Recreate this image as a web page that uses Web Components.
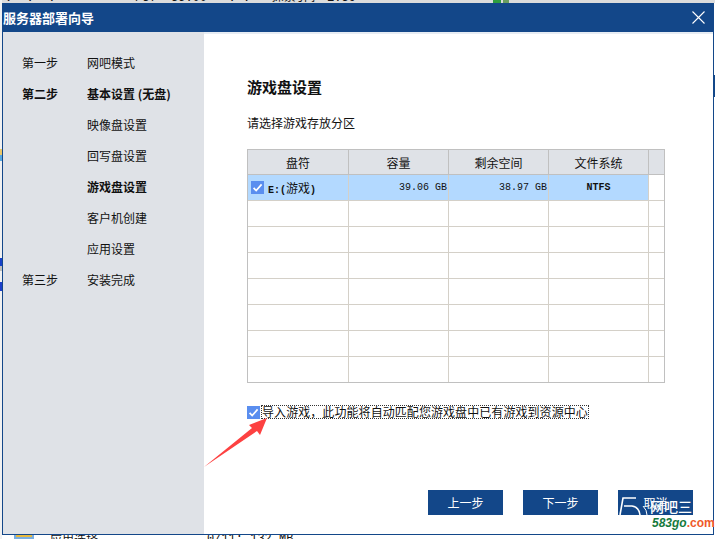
<!DOCTYPE html>
<html lang="zh">
<head>
<meta charset="utf-8">
<title>服务器部署向导</title>
<style>
html,body{margin:0;padding:0;background:#fff}
body{font-family:"Noto Sans CJK SC","Liberation Sans",sans-serif;font-size:12px;color:#111}
</style>
</head>
<body>
<x-desktop>
  <x-window caption="服务器部署向导">
    <x-steps slot="side">
      <x-step label="第一步">网吧模式</x-step>
      <x-step label="第二步" strong>基本设置 (无盘)</x-step>
      <x-step>映像盘设置</x-step>
      <x-step>回写盘设置</x-step>
      <x-step strong>游戏盘设置</x-step>
      <x-step>客户机创建</x-step>
      <x-step>应用设置</x-step>
      <x-step label="第三步">安装完成</x-step>
    </x-steps>
    <x-page heading="游戏盘设置" hint="请选择游戏存放分区">
      <x-drive-table></x-drive-table>
      <x-import-option>导入游戏，此功能将自动匹配您游戏盘中已有游戏到资源中心</x-import-option>
      <x-button slot="footer">上一步</x-button>
      <x-button slot="footer">下一步</x-button>
      <x-button slot="footer">取消</x-button>
    </x-page>
  </x-window>
  <x-annotations></x-annotations>
</x-desktop>
<script>
const sh=(el,html)=>{el.attachShadow({mode:'open'}).innerHTML=html;};
const check=`<svg width="13" height="13" viewBox="0 0 13 13" style="display:block;flex:none"><rect width="13" height="13" fill="#5a8eef"/><path d="M2.6 6.8 5.2 9.6 10.6 3.4" fill="none" stroke="#fff" stroke-width="1.7"/></svg>`;

customElements.define('x-desktop',class extends HTMLElement{constructor(){super();sh(this,`<style>
:host{display:block;position:relative;width:715px;height:539px;box-sizing:border-box;padding:3px 1px 4px 2px;overflow:hidden;background:#fff}
.s{position:absolute}
.t{position:absolute;font:12px "Liberation Mono","Noto Sans CJK SC",monospace;color:#111;white-space:pre;line-height:12px}
</style>
<div class="s" style="left:0;top:0;width:715px;height:3px;background:#dcdcdc"></div>
<div class="t" style="left:135px;top:-8px">/37  35.00   : :   探索引擎 1.39</div>
<div class="t" style="left:5px;top:-8px">:  :  :</div>
<div class="s" style="left:493px;top:0;width:8px;height:3px;background:#2f9e3f"></div>
<div class="s" style="left:503px;top:0;width:6px;height:3px;background:#6a9e5f"></div>
<div class="s" style="left:0;top:0;width:2px;height:539px;background:#f1f1f1"></div>
<div class="s" style="left:0;top:149px;width:2px;height:6px;background:#ecc869"></div>
<div class="s" style="left:0;top:155px;width:2px;height:6px;background:#59a9e0"></div>
<div class="s" style="left:0;top:258px;width:2px;height:8px;background:#1640c8"></div>
<div class="s" style="left:0;top:266px;width:2px;height:5px;background:#bdbdbd"></div>
<div class="s" style="left:0;top:282px;width:2px;height:9px;background:#1c3fcb"></div>
<div class="s" style="left:714px;top:75px;width:1px;height:22px;background:#134789"></div>
<div class="s" style="left:14px;top:535px;width:20px;height:4px;background:#7aaee0"></div>
<div class="s" style="left:16px;top:535px;width:16px;height:2px;background:#e8b93d"></div>
<div class="t" style="left:50px;top:533px;font-family:'Noto Sans CJK SC',sans-serif">应用选择</div>
<div class="t" style="left:207px;top:533px">0/11: 132 MB</div>
<slot></slot>`);}});

customElements.define('x-window',class extends HTMLElement{constructor(){super();sh(this,`<style>
:host{display:flex;flex-direction:column;box-sizing:border-box;position:relative;width:712px;height:532px;border:1px solid #134789;border-top:0;background:#fff}
header{flex:none;height:29px;background:#134789;display:flex;align-items:center;justify-content:space-between;padding:0 7px 0 0}
h1{margin:0;font-size:13px;line-height:29px;font-weight:700;color:#fff;white-space:nowrap}
svg{display:block}
.body{flex:1;display:flex;min-height:0}
</style>
<header><h1>${this.getAttribute('caption')}</h1>
<svg width="15" height="15" viewBox="0 0 15 15"><path d="M1.5 1.5 13.5 13.5M13.5 1.5 1.5 13.5" stroke="#fff" stroke-width="1.1" fill="none"/></svg></header>
<div class="body"><slot name="side"></slot><slot></slot></div>`);}});

customElements.define('x-steps',class extends HTMLElement{constructor(){super();sh(this,`<style>
:host{display:flex;flex-direction:column;flex:none;box-sizing:border-box;width:201px;background:#dfe2e7;padding:15px 0 0 19px}
</style><slot></slot>`);}});

customElements.define('x-step',class extends HTMLElement{constructor(){super();sh(this,`<style>
:host{display:grid;grid-template-columns:65px 1fr;height:31px;align-items:center;line-height:31px;font-size:12px;color:#111;white-space:nowrap}
:host([strong]){font-weight:700}
</style><span>${this.getAttribute('label')||''}</span><span><slot></slot></span>`);}});

customElements.define('x-page',class extends HTMLElement{constructor(){super();sh(this,`<style>
:host{display:flex;flex-direction:column;flex:1;min-width:0;box-sizing:border-box;border-top:2px solid #e6ecf3;padding:0 20px 19px 43px}
h2{margin:43px 0 0;font-size:15px;line-height:20px;font-weight:700;color:#111}
p{margin:17px 0 0;font-size:12px;line-height:18px;color:#111}
.content{margin-top:17px;display:flex;flex-direction:column;gap:22px}
footer{margin-top:auto;display:flex;justify-content:flex-end;gap:20px}
</style>
<h2>${this.getAttribute('heading')}</h2><p>${this.getAttribute('hint')}</p>
<div class="content"><slot></slot></div>
<footer><slot name="footer"></slot></footer>`);}});

customElements.define('x-drive-table',class extends HTMLElement{constructor(){super();
const widths='101px 100px 100px 100px 16px';
let rows='';
for(let i=0;i<7;i++){rows+=`<div class="row">${'<i></i>'.repeat(5)}</div>`;}
sh(this,`<style>
:host{display:block;box-sizing:border-box;width:418px;height:234px;border:1px solid #c0c0c0;background:#fff}
.row{display:grid;grid-template-columns:${widths};height:26px;box-sizing:border-box;border-bottom:1px solid #d4d0c8}
.row:last-child{border-bottom:0;height:25px}
.row>*{box-sizing:border-box;border-right:1px solid #d4d0c8;display:flex;align-items:center;min-width:0}
.row>*:last-child{border-right:0}
.head{height:25px;background:#dfe2e7;border-bottom:1px solid #c0c0c0}
.head>*{border-right-color:#c0c0c0;justify-content:center;font-size:12px;color:#111}
.sel>*:not(:last-child){background:#b3d9ff}
.mono{font:10px "Liberation Mono","Noto Sans CJK SC",monospace;color:#111}
.bold{font-weight:700}
.r{justify-content:flex-end;padding-right:1px}
.c{justify-content:center}
.drive{padding-left:3px;gap:4px}
.drive b{white-space:pre}
.drive em{font:12px "Noto Sans CJK SC",sans-serif}
</style>
<div class="row head"><span>盘符</span><span>容量</span><span>剩余空间</span><span>文件系统</span><i></i></div>
<div class="row sel"><span class="mono drive">${check}<b>E:(<em>游戏</em>)</b></span><span class="mono r">39.06 GB</span><span class="mono r">38.97 GB</span><span class="mono bold c">NTFS</span><i></i></div>
${rows}`);}});

customElements.define('x-import-option',class extends HTMLElement{constructor(){super();sh(this,`<style>
:host{display:flex;align-items:center;height:14px;font-size:12px;color:#111;white-space:nowrap}
span{margin-left:1px;outline:1px dotted #333;outline-offset:-1px;line-height:14px;height:14px;padding:0 1px;letter-spacing:.07px}
</style>${check}<span><slot></slot></span>`);}});

customElements.define('x-button',class extends HTMLElement{constructor(){super();sh(this,`<style>
:host{display:flex;align-items:center;justify-content:center;width:75px;height:25px;background:#134789;color:#fff;font-size:12px;line-height:25px}
</style><slot></slot>`);}});

customElements.define('x-annotations',class extends HTMLElement{constructor(){super();sh(this,`<style>
:host{position:absolute;inset:0;display:block;pointer-events:none}
svg{position:absolute;left:0;top:0}
.wm{position:absolute;left:650px;top:498px;width:43px;height:17px;overflow:hidden;color:#fff;font-size:14px;line-height:17px;font-weight:500;white-space:nowrap}
.go{position:absolute;left:652px;top:516px;font:italic 700 12px/15px "Liberation Sans",sans-serif;color:#167a3c;white-space:nowrap}
.go span{color:#ef5a2a;font-style:normal}
</style>
<svg width="715" height="539" viewBox="0 0 715 539">
<polygon points="204,467 252,428 249,425 267,418 260,435 257,431" fill="#fd4141"/>
<path d="M636 498H623L620 515M624 506H632Q639 507 640 515" fill="none" stroke="#fff" stroke-width="1.6"/>
<path d="M643 506Q647 510 647 515" fill="none" stroke="#fff" stroke-width="1"/>
</svg>
<div class="wm">网吧三</div>
<div class="go">583go<span>.com</span></div>`);}});
</script>
</body>
</html>
